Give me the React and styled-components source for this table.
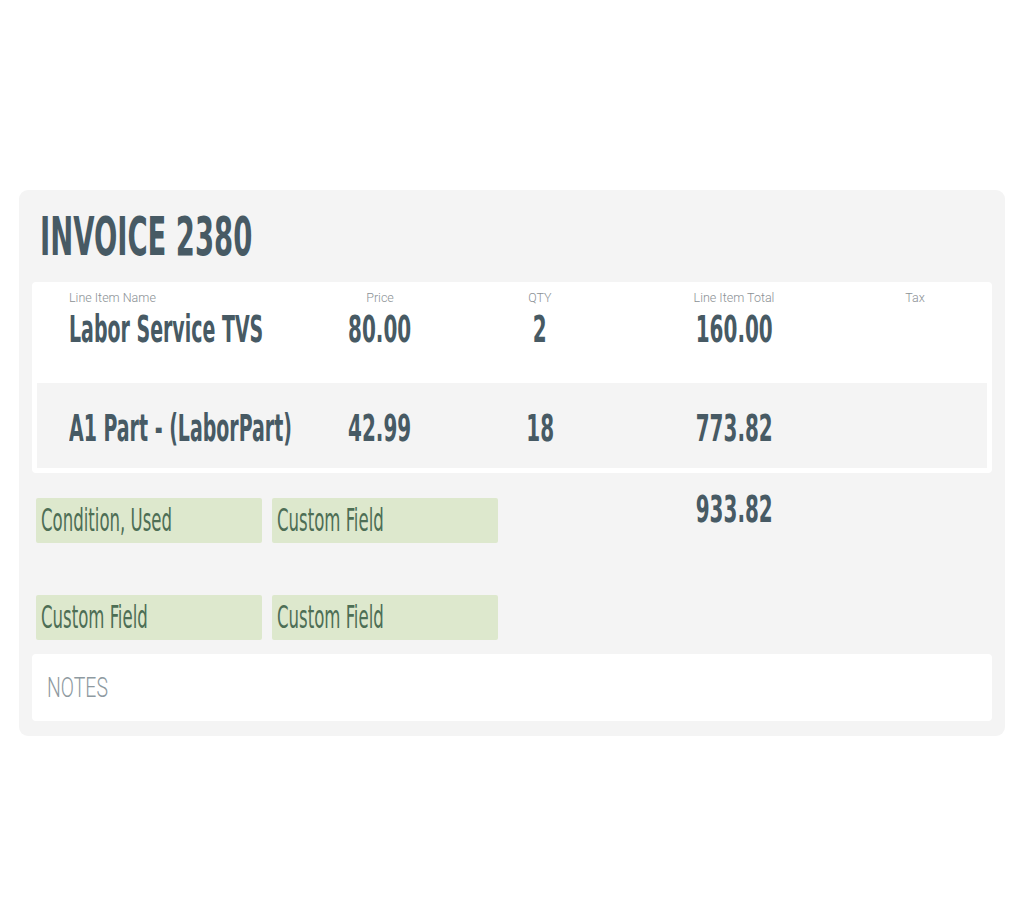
import styled, { createGlobalStyle } from "styled-components";

const GlobalStyle = createGlobalStyle`
  body {
    margin: 0;
    background: #ffffff;
    font-family: "DejaVu Sans Condensed", "Liberation Sans", sans-serif;
  }
`;

const lines = [
  { name: "Labor Service TVS", price: "80.00", qty: "2", total: "160.00" },
  { name: "A1 Part - (LaborPart)", price: "42.99", qty: "18", total: "773.82" },
];

const fields = ["Condition, Used", "Custom Field", "Custom Field", "Custom Field"];

export default function App() {
  return (
    <Page>
      <GlobalStyle />
      <Card>
        <Title>
          <Squeeze $origin="left" $scale={0.565}>
            INVOICE 2380
          </Squeeze>
        </Title>

        <ItemsPanel>
          {lines.map((line, i) => (
            <ItemRow key={line.name} $shaded={i > 0}>
              <Cell $align="left">
                {i === 0 && <Label>Line Item Name</Label>}
                <Value>
                  <Squeeze $origin="left" $scale={0.57}>
                    {line.name}
                  </Squeeze>
                </Value>
              </Cell>
              <Cell>
                {i === 0 && <Label>Price</Label>}
                <Value>
                  <Squeeze>{line.price}</Squeeze>
                </Value>
              </Cell>
              <Cell>
                {i === 0 && <Label>QTY</Label>}
                <Value>
                  <Squeeze>{line.qty}</Squeeze>
                </Value>
              </Cell>
              <Cell>
                {i === 0 && <Label>Line Item Total</Label>}
                <Value>
                  <Squeeze>{line.total}</Squeeze>
                </Value>
              </Cell>
              <Cell>{i === 0 && <Label>Tax</Label>}</Cell>
            </ItemRow>
          ))}
        </ItemsPanel>

        <Extras>
          <Fields>
            {fields.map((f, i) => (
              <Field key={i}>
                <Squeeze $origin="left" $scale={0.575}>
                  {f}
                </Squeeze>
              </Field>
            ))}
          </Fields>
          <GrandTotal>
            <Squeeze>933.82</Squeeze>
          </GrandTotal>
        </Extras>

        <Notes>
          <Squeeze $origin="left" $scale={0.72}>
            NOTES
          </Squeeze>
        </Notes>
      </Card>
    </Page>
  );
}

const Page = styled.div`
  padding: 190px 19px 0 19px;
`;

const Card = styled.div`
  width: 986px;
  box-sizing: border-box;
  background: #f4f4f4;
  border-radius: 9px;
  padding: 0 13px 15px;
`;

const Squeeze = styled.span`
  display: inline-block;
  white-space: nowrap;
  transform: scaleX(${(p) => p.$scale || 0.6});
  transform-origin: ${(p) => (p.$origin === "left" ? "left center" : "center center")};
`;

const Title = styled.h1`
  margin: 0;
  height: 92px;
  box-sizing: border-box;
  padding: 20px 0 0 8px;
  font-size: 54px;
  line-height: 54px;
  font-weight: 700;
  color: #475a64;
`;

const ItemsPanel = styled.div`
  background: #ffffff;
  border-radius: 4px;
  padding: 0 5px 5px;
`;

const ItemRow = styled.div`
  display: grid;
  grid-template-columns: 260px 166px 154px 234px 128px;
  height: ${(p) => (p.$shaded ? "85px" : "101px")};
  box-sizing: border-box;
  padding-top: ${(p) => (p.$shaded ? "26px" : "8px")};
  background: ${(p) => (p.$shaded ? "#f4f4f4" : "#ffffff")};
`;

const Cell = styled.div`
  display: flex;
  flex-direction: column;
  align-items: ${(p) => (p.$align === "left" ? "flex-start" : "center")};
  padding-left: ${(p) => (p.$align === "left" ? "32px" : "0")};
`;

const Label = styled.div`
  font-family: Roboto, "Liberation Sans", sans-serif;
  font-weight: 300;
  font-size: 12.5px;
  line-height: 15px;
  color: #8b9195;
  margin-bottom: 5px;
`;

const Value = styled.div`
  font-size: 37px;
  line-height: 40px;
  font-weight: 700;
  color: #475a64;
`;

const Extras = styled.div`
  display: grid;
  grid-template-columns: 585px 234px 1fr;
  padding: 25px 0 14px;
`;

const Fields = styled.div`
  display: grid;
  grid-template-columns: 226px 226px;
  column-gap: 10px;
  row-gap: 52px;
  padding-left: 4px;
`;

const Field = styled.div`
  height: 45px;
  box-sizing: border-box;
  background: #dde8cd;
  border-radius: 2px;
  padding: 5px 0 0 5px;
  font-size: 32px;
  line-height: 34px;
  color: #4d6e55;
`;

const GrandTotal = styled.div`
  text-align: center;
  margin-top: -8px;
  font-size: 37px;
  line-height: 40px;
  font-weight: 700;
  color: #475a64;
`;

const Notes = styled.div`
  background: #ffffff;
  border-radius: 4px;
  height: 67px;
  box-sizing: border-box;
  padding: 19px 0 0 15px;
  font-family: Roboto, "Liberation Sans", sans-serif;
  font-weight: 300;
  font-size: 27px;
  line-height: 30px;
  color: #8e9aa1;
`;
